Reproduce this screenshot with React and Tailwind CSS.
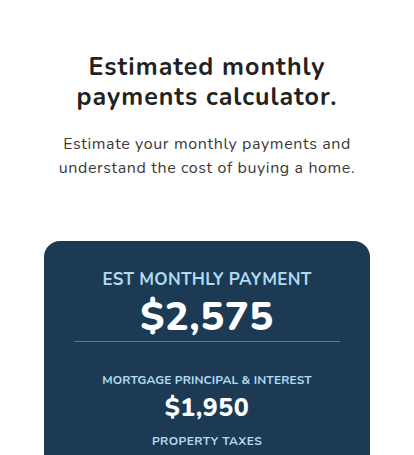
export default function App() {
  return (
    <div
      className="min-h-screen bg-white flex flex-col items-center pt-[52px]"
      style={{ fontFamily: "Nunito, Lato, 'Noto Sans', sans-serif" }}
    >
      {/* Heading */}
      <h1 className="text-[25px] leading-[30px] font-bold tracking-[1px] text-[#222] text-center">
        Estimated monthly
        <br />
        payments calculator.
      </h1>
      <p className="mt-[20px] text-[16px] leading-[24px] tracking-[0.6px] text-[#3a3a3a] text-center">
        Estimate your monthly payments and
        <br />
        understand the cost of buying a home.
      </p>

      {/* Payment card */}
      <div className="mt-[61px] w-[326px] bg-[#1c3a54] rounded-[16px] flex flex-col items-center px-[30px] pt-[28px] pb-6">
        <div className="text-[17px] leading-[22px] tracking-[0.3px] font-bold text-[#b0dcf0]">
          EST MONTHLY PAYMENT
        </div>
        <div className="mt-[4px] text-[40px] leading-[44px] font-extrabold tracking-[0.5px] text-white">
          $2,575
        </div>
        <div className="w-full h-px bg-[#5a7a94] mt-[2px]"></div>
        <div className="mt-[30px] text-[12px] leading-[16px] tracking-[0.1px] font-bold text-[#b0dcf0]">
          MORTGAGE PRINCIPAL &amp; INTEREST
        </div>
        <div className="mt-[3px] text-[25px] leading-[34px] font-extrabold tracking-[0.5px] text-white">
          $1,950
        </div>
        <div className="mt-[8px] text-[12px] leading-[16px] tracking-[0.4px] font-bold text-[#b0dcf0]">
          PROPERTY TAXES
        </div>
      </div>
    </div>
  );
}
